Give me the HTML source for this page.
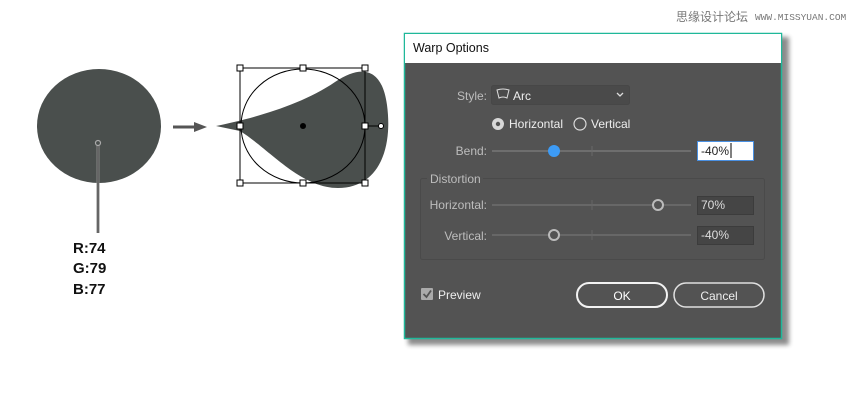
<!DOCTYPE html>
<html><head><meta charset="utf-8"><style>
html,body{margin:0;padding:0;background:#fff;width:850px;height:419px;overflow:hidden}
</style></head><body>
<svg width="850" height="419" viewBox="0 0 850 419" xmlns="http://www.w3.org/2000/svg" style="display:block">
<defs><filter id="sh" x="-10%" y="-10%" width="130%" height="130%"><feGaussianBlur stdDeviation="2.5"/></filter></defs>
<text x="676" y="21" font-family="'Liberation Sans','Noto Sans CJK SC',sans-serif" font-size="12" fill="#777">思缘设计论坛</text>
<text x="755" y="20" font-family="'Liberation Mono',monospace" font-size="9.5" fill="#777">WWW.MISSYUAN.COM</text>
<!-- left shape -->
<ellipse cx="99" cy="126" rx="62" ry="57" fill="#4a4f4d"/>
<line x1="98" y1="145" x2="98" y2="233" stroke="#888" stroke-width="3"/>
<line x1="98" y1="145" x2="98" y2="233" stroke="#444" stroke-width="1"/>
<circle cx="98" cy="143" r="2.5" fill="none" stroke="#aaa" stroke-width="1.2"/>
<g font-family="'Liberation Sans',sans-serif" font-weight="bold" font-size="15" fill="#111">
<text x="73" y="253">R:74</text><text x="73" y="273">G:79</text><text x="73" y="294">B:77</text></g>
<!-- arrow -->
<line x1="173" y1="127" x2="196" y2="127" stroke="#555" stroke-width="3"/>
<polygon points="194,122 207,127 194,132" fill="#555"/>
<!-- warped shape -->
<path d="M216,126 C250,119 300,106 335,82 C362,64 382,68 387,105 C393,150 378,188 338,188 C300,188 268,148 240,131 Z" fill="#4a4f4d"/>
<ellipse cx="303" cy="126" rx="62" ry="57" fill="none" stroke="#000" stroke-width="1"/>
<rect x="240" y="68" width="125" height="115" fill="none" stroke="#000" stroke-width="1"/>
<line x1="365" y1="126" x2="378" y2="126" stroke="#000"/>
<circle cx="381" cy="126" r="2.5" fill="#fff" stroke="#000"/>
<circle cx="303" cy="126" r="3" fill="#000"/>
<g fill="#fff" stroke="#000" stroke-width="1">
<rect x="237" y="65" width="6" height="6"/><rect x="300" y="65" width="6" height="6"/><rect x="362" y="65" width="6" height="6"/>
<rect x="237" y="123" width="6" height="6"/><rect x="362" y="123" width="6" height="6"/>
<rect x="237" y="180" width="6" height="6"/><rect x="300" y="180" width="6" height="6"/><rect x="362" y="180" width="6" height="6"/></g>
<!-- dialog -->
<rect x="408" y="37" width="381" height="308" fill="#000" opacity="0.45" filter="url(#sh)"/>
<rect x="404.5" y="33.5" width="377" height="305" fill="#535353" stroke="#1fb89a" stroke-width="1.5"/>
<rect x="405" y="34" width="376" height="29" fill="#fff"/>
<text x="413" y="52" font-family="'Liberation Sans',sans-serif" font-size="12.5" fill="#111">Warp Options</text>
<g font-family="'Liberation Sans',sans-serif" font-size="12" fill="#bdbdbd">
<text x="487" y="100" text-anchor="end">Style:</text>
<rect x="491.5" y="85.5" width="138" height="19" rx="2" fill="#4a4a4a" stroke="#474747"/>
<path d="M497,90 Q503,88 509,90 L507,98 Q503,96 499,98 Z" fill="none" stroke="#ddd" stroke-width="1"/>
<text x="513" y="100" fill="#eee">Arc</text>
<path d="M617,93 L620,96 L623,93" fill="none" stroke="#ddd" stroke-width="1.3"/>
<circle cx="498" cy="124" r="6" fill="#d8d8d8"/><circle cx="498" cy="124" r="2.2" fill="#535353"/>
<text x="509" y="128" fill="#eee">Horizontal</text>
<circle cx="580" cy="124" r="6" fill="none" stroke="#ddd" stroke-width="1.2"/>
<text x="591" y="128" fill="#eee">Vertical</text>
<text x="487" y="155" text-anchor="end">Bend:</text>
<line x1="492" y1="151" x2="691" y2="151" stroke="#777" stroke-width="1.5"/>
<line x1="592" y1="146" x2="592" y2="156" stroke="#6a6a6a"/>
<circle cx="554" cy="151" r="6" fill="#3d9bf5"/>
<rect x="697.5" y="141.5" width="56" height="19" fill="#fff" stroke="#4a90e2"/>
<text x="701" y="155" fill="#222">-40%</text>
<line x1="731" y1="143" x2="731" y2="158" stroke="#000"/>
<rect x="420.5" y="178.5" width="344" height="81" rx="2" fill="none" stroke="#4a4a4a"/>
<rect x="427" y="172" width="56" height="12" fill="#535353"/>
<text x="430" y="183">Distortion</text>
<text x="487" y="209" text-anchor="end">Horizontal:</text>
<line x1="492" y1="205" x2="691" y2="205" stroke="#6e6e6e" stroke-width="1.5"/>
<line x1="592" y1="200" x2="592" y2="210" stroke="#666"/>
<circle cx="658" cy="205" r="5" fill="#535353" stroke="#bbb" stroke-width="2"/>
<rect x="697.5" y="196.5" width="56" height="18" fill="#454545" stroke="#3c3c3c"/>
<text x="701" y="209" fill="#ddd">70%</text>
<text x="487" y="240" text-anchor="end">Vertical:</text>
<line x1="492" y1="235" x2="691" y2="235" stroke="#6e6e6e" stroke-width="1.5"/>
<line x1="592" y1="230" x2="592" y2="240" stroke="#666"/>
<circle cx="554" cy="235" r="5" fill="#535353" stroke="#bbb" stroke-width="2"/>
<rect x="697.5" y="226.5" width="56" height="18" fill="#454545" stroke="#3c3c3c"/>
<text x="701" y="239" fill="#ddd">-40%</text>
<rect x="421" y="288" width="12" height="12" rx="1" fill="#aaa"/>
<path d="M423.5,294 L426.5,297 L431,290.5" fill="none" stroke="#535353" stroke-width="1.8"/>
<text x="438" y="299" fill="#eee">Preview</text>
<rect x="577" y="283" width="90" height="24" rx="12" fill="none" stroke="#f2f2f2" stroke-width="2"/>
<text x="622" y="300" text-anchor="middle" fill="#fff">OK</text>
<rect x="674" y="283" width="90" height="24" rx="12" fill="none" stroke="#e0e0e0" stroke-width="1.5"/>
<text x="719" y="300" text-anchor="middle" fill="#eee">Cancel</text>
</g>
</svg>
</body></html>
